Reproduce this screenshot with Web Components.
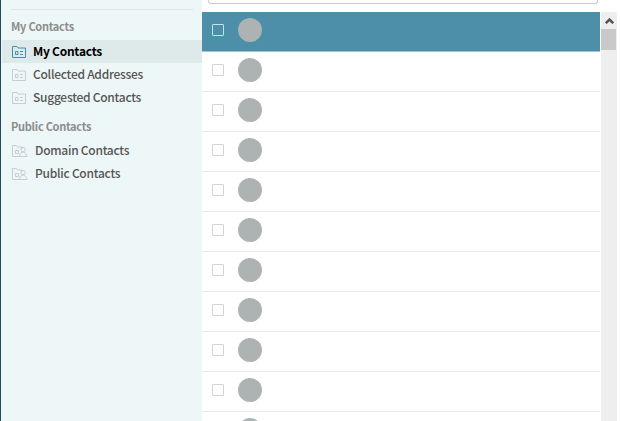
<!DOCTYPE html>
<html>
<head>
<meta charset="utf-8">
<style>
html,body{margin:0;padding:0;height:100%;overflow:hidden;background:#fff}
body{font-family:"Noto Sans CJK KR","Noto Sans",sans-serif}
</style>
</head>
<body>
<contact-app>
	<contact-sidebar slot="side">
		<contact-group label="My Contacts">
			<contact-item icon="folder" active>My Contacts</contact-item>
			<contact-item icon="folder">Collected Addresses</contact-item>
			<contact-item icon="folder">Suggested Contacts</contact-item>
		</contact-group>
		<contact-group label="Public Contacts" public>
			<contact-item icon="shared">Domain Contacts</contact-item>
			<contact-item icon="shared">Public Contacts</contact-item>
		</contact-group>
	</contact-sidebar>
	<contact-list slot="main" rows="11"></contact-list>
</contact-app>
<script>
(function() {
	const icons = {
		folder: `<svg width="14" height="12" viewBox="0 0 14 12" fill="none" stroke="currentColor"><path d="M.5 11.500V.5h4.500l1 1.500h7.500v9.500z"/><path d="M3.500 5.500h2.500v3h-2.500zM8 5.500h3M8 8.500h3"/></svg>`,
		shared: `<svg width="16" height="12" viewBox="0 0 16 12" fill="none" stroke="currentColor"><path d="M.5 11.500V.5h4l1 1.500h4.500v2"/><path d="M.5 11.500h7"/><path d="M3.500 5.500h3v3h-3z"/><circle cx="11" cy="4.500" r="2.200"/><path d="M7.500 11.500c0-2 1-3 2.500-4.300h2c1.500 1.300 3 2.300 3 4.300z"/></svg>`
	};

	class ContactApp extends HTMLElement {
		constructor() {
			super();
			this.attachShadow({mode: 'open'}).innerHTML = `
				<style>
				:host{display:flex;width:620px;height:421px;overflow:hidden;background:#fff}
				.edge{flex:none;width:1px;background:#1f4a5c;border-right:1px solid #eef7f7}
				.side{display:block;flex:none;width:200px}
				.main{display:block;flex:1;min-width:0}
				</style>
				<div class="edge"></div>
				<div class="side"><slot name="side"></slot></div>
				<div class="main"><slot name="main"></slot></div>
			`;
		}
	}

	class ContactSidebar extends HTMLElement {
		constructor() {
			super();
			this.attachShadow({mode: 'open'}).innerHTML = `
				<style>
				:host{display:block;height:421px;box-sizing:border-box;padding-top:9px;background:#eef7f7}
				.rule{height:1px;margin:0 9px 0 9px;background:#dce6e6}
				</style>
				<div class="rule"></div>
				<slot></slot>
			`;
		}
	}

	class ContactGroup extends HTMLElement {
		constructor() {
			super();
			this.attachShadow({mode: 'open'}).innerHTML = `
				<style>
				:host{display:block;padding-top:7px}
				:host([public]){padding-top:8px}
				.label{height:23px;line-height:19px;padding-left:9px;font-size:11px;font-weight:700;letter-spacing:-.27px;color:#8d8d8d}
				:host([public]) .label{height:22px}
				</style>
				<div class="label"></div>
				<slot></slot>
			`;
			this.shadowRoot.querySelector('.label').textContent = this.getAttribute('label');
		}
	}

	class ContactItem extends HTMLElement {
		constructor() {
			super();
			const type = this.getAttribute('icon');
			this.attachShadow({mode: 'open'}).innerHTML = `
				<style>
				:host{display:flex;align-items:center;height:23px;padding-left:10px;font-size:12px;font-weight:500;letter-spacing:-.26px;color:#555;white-space:nowrap}
				:host([active]){background:#deeaea;color:#000;font-weight:700}
				.icon{display:flex;flex:none;width:21px;color:#c3d0d3}
				:host([active]) .icon{color:#4a8ca8}
				:host([icon="shared"]) .icon{width:23px}
				.text{margin-top:-2px}
				</style>
				<span class="icon">${icons[type]}</span>
				<span class="text"><slot></slot></span>
			`;
		}
	}

	class ContactRow extends HTMLElement {
		constructor() {
			super();
			this.attachShadow({mode: 'open'}).innerHTML = `
				<style>
				:host{display:flex;flex:none;align-items:center;gap:14px;height:36px;padding:0 0 3px 10px;border-bottom:1px solid #e3e9e9;background:#fff}
				:host([selected]){background:#4d8fa9;border-bottom-color:#9cc4d3}
				.check{flex:none;width:10px;height:10px;border:1px solid #d2d2d2;border-radius:1px}
				:host([selected]) .check{border-color:#c9e0e8}
				.avatar{flex:none;width:24px;height:24px;border-radius:50%;background:#adb2b3}
				</style>
				<span class="check"></span>
				<span class="avatar"></span>
			`;
		}
	}

	class ContactList extends HTMLElement {
		constructor() {
			super();
			this.attachShadow({mode: 'open'}).innerHTML = `
				<style>
				:host{display:flex;height:421px;overflow:hidden}
				.body{flex:none;width:398px;display:flex;flex-direction:column;overflow:hidden}
				.search{flex:none;height:12px;display:flex;align-items:flex-start;padding:0 2px 0 6px}
				.input{flex:1;height:3px;border:1px solid #ccc;border-top:0;border-radius:0 0 3px 3px}
				.bar{flex:none;width:16px;height:409px;margin:12px 0 0 1px;background:#eee;display:flex;flex-direction:column}
				.btn{flex:none;height:17px;display:flex;align-items:center;justify-content:center}
				.thumb{flex:none;width:15px;height:21px;background:#c9c9c9}
				</style>
				<div class="body">
					<div class="search"><div class="input"></div></div>
				</div>
				<div class="bar">
					<div class="btn"><svg width="9" height="6" viewBox="0 0 9 6"><path d="M.8 5.200L4.500 1.500 8.200 5.200" fill="none" stroke="#555" stroke-width="2.500"/></svg></div>
					<div class="thumb"></div>
				</div>
			`;
			const body = this.shadowRoot.querySelector('.body');
			const n = Number(this.getAttribute('rows'));
			for (let i = 0; i < n; i++) {
				const row = document.createElement('contact-row');
				if (i === 0) row.setAttribute('selected', '');
				body.appendChild(row);
			}
		}
	}

	customElements.define('contact-app', ContactApp);
	customElements.define('contact-sidebar', ContactSidebar);
	customElements.define('contact-group', ContactGroup);
	customElements.define('contact-item', ContactItem);
	customElements.define('contact-row', ContactRow);
	customElements.define('contact-list', ContactList);
})();
</script>
</body>
</html>
